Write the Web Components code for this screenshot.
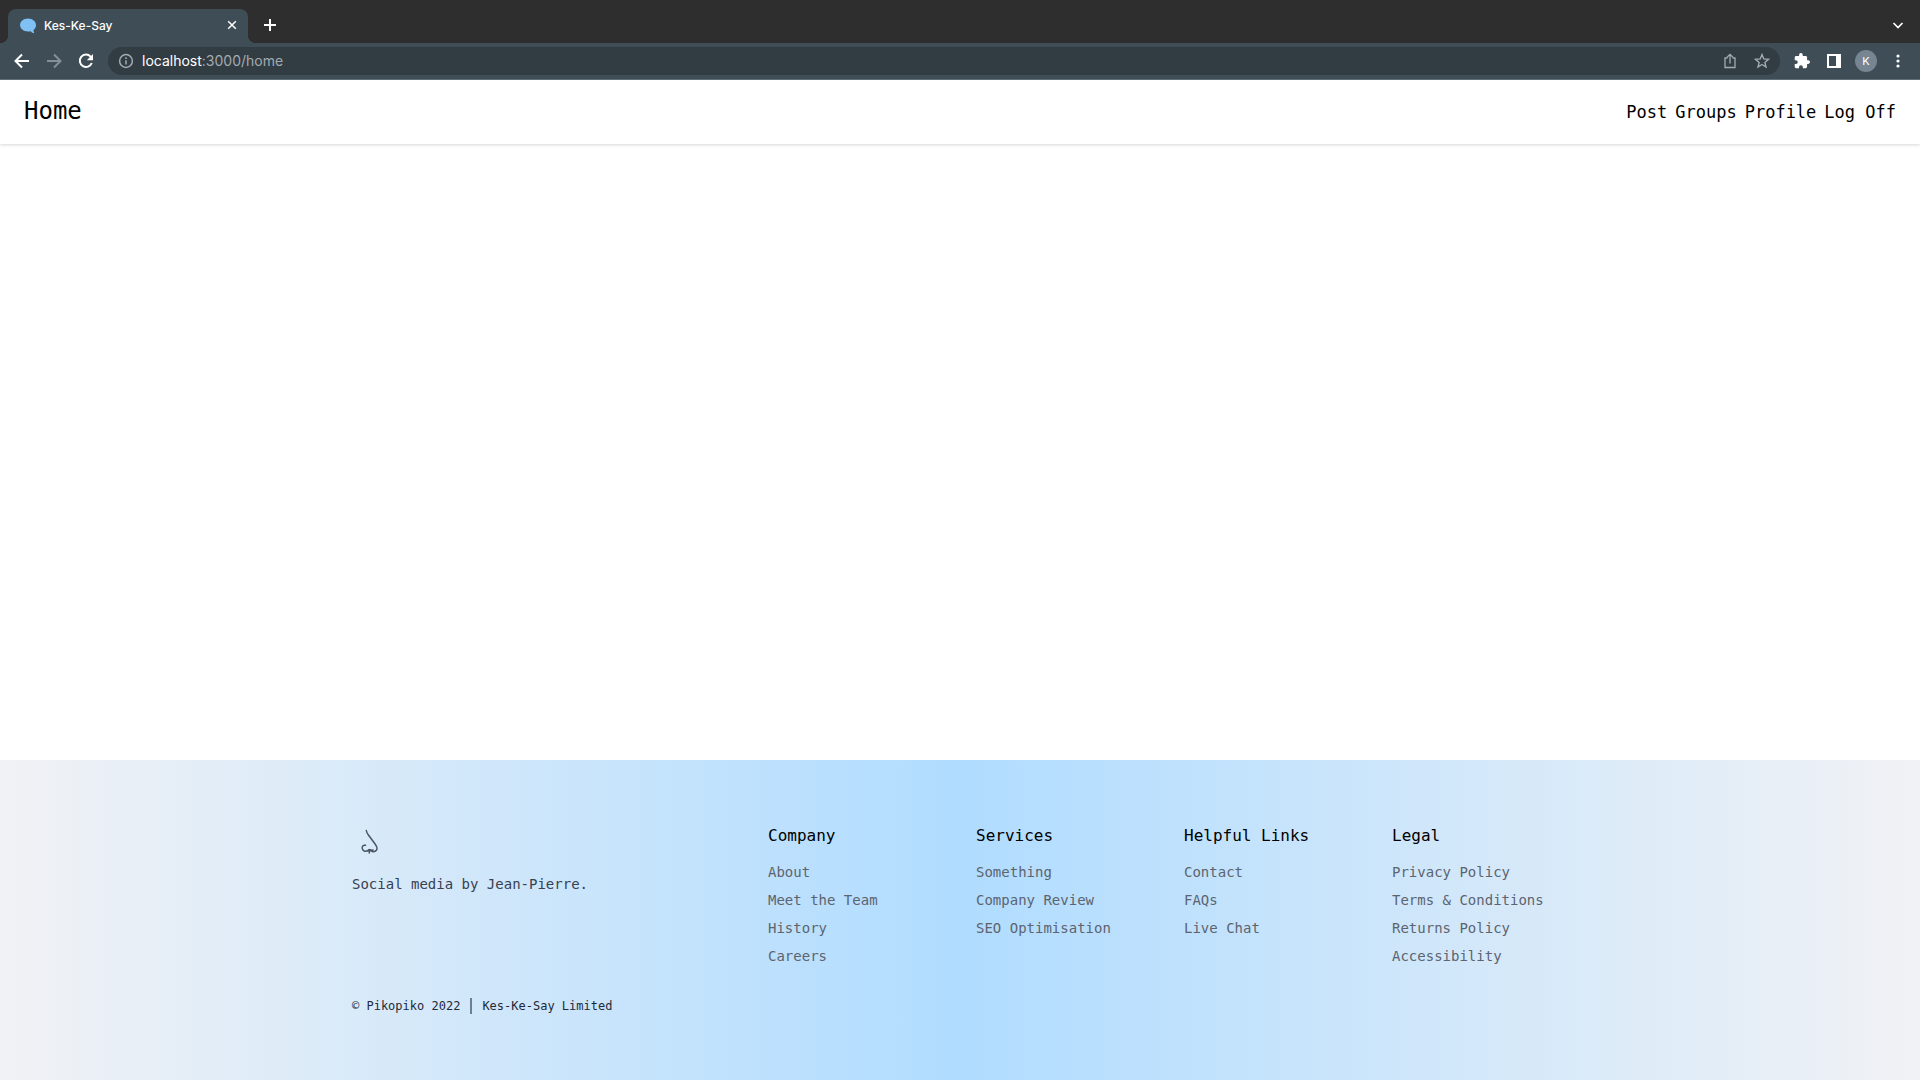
<!DOCTYPE html>
<html lang="en">
<head>
<meta charset="utf-8">
<title>Kes-Ke-Say</title>
<style>
html,body{height:100%}
body{margin:0;background:#fff;color:#000;font-family:"DejaVu Sans Mono","Liberation Mono",monospace}
</style>
</head>
<body>
<app-page>
  <browser-frame slot="frame"></browser-frame>
  <site-header slot="header"></site-header>
  <site-footer slot="footer">
    <link-column heading="Company" items="About|Meet the Team|History|Careers"></link-column>
    <link-column heading="Services" items="Something|Company Review|SEO Optimisation"></link-column>
    <link-column heading="Helpful Links" items="Contact|FAQs|Live Chat"></link-column>
    <link-column heading="Legal" items="Privacy Policy|Terms &amp; Conditions|Returns Policy|Accessibility"></link-column>
  </site-footer>
</app-page>

<template id="t-page">
<style>
:host{display:flex;flex-direction:column;min-height:100vh}
main{flex:1}
</style>
<slot name="frame"></slot>
<slot name="header"></slot>
<main></main>
<slot name="footer"></slot>
</template>

<template id="t-frame">
<style>
:host{display:block;font-family:Inter,"Liberation Sans",sans-serif;color:#fff;background:#3e4d56}
*{box-sizing:border-box}
button{display:flex;align-items:center;justify-content:center;flex:none;width:32px;height:32px;padding:0;border:0;background:none;color:inherit;font:inherit}
svg{display:block;fill:none;stroke:currentColor}
.tabs{display:flex;align-items:flex-end;height:43px;padding:0 6px 0 8px;background:#2e2e2e}
.tabs button{height:34px;padding-bottom:2px}
.tab{display:flex;align-items:center;width:240px;height:34px;padding-left:12px;border-radius:8px 8px 0 0;background:#3e4d56;font-size:12px;font-weight:500;position:relative}
.tab::before,.tab::after{content:"";position:absolute;bottom:0;width:8px;height:8px}
.tab::before{left:-8px;background:radial-gradient(circle at 0 0,transparent 8px,#3e4d56 8px)}
.tab::after{right:-8px;background:radial-gradient(circle at 100% 0,transparent 8px,#3e4d56 8px)}
.tab span{flex:1;padding:0 0 2px 8px}
.fill{flex:1}
.new{margin-left:6px}
.bar{display:flex;align-items:center;height:37px;padding:0 6px 0 6px;border-bottom:1px solid #64727b}
.dim{color:#83909a}
form{display:flex;align-items:center;flex:1;height:28px;margin:0 6px;padding:0 2px 0 10px;border-radius:14px;background:#323c43;color:#a3abb1}
.url{flex:1;padding-left:8px;font-size:14px;line-height:20px;color:#a3abb1;text-decoration:none}
.url b{font-weight:400;color:#fff}
.avatar{width:22px;height:22px;border-radius:50%;background:#778592;font-size:11px;line-height:22px;text-align:center}
</style>
<div class="tabs">
  <div class="tab">
    <svg width="16" height="16" viewBox="0 0 16 16"><path d="M8 .5C3.6.5 0 3.400 0 7s3.600 6.500 8 6.500c.9 0 1.800-.1 2.600-.3.900 1.200 2.200 2 3.900 2-.6-.8-1-2-1-3.300C15.100 10.700 16 9 16 7 16 3.400 12.400.5 8 .5z" fill="#7fc1f4" stroke="none"/></svg>
    <span>Kes-Ke-Say</span>
    <button aria-label="Close tab"><svg width="10" height="10" viewBox="0 0 10 10" stroke-width="1.500"><path d="M1.200 1.200l7.600 7.600M8.800 1.200L1.200 8.800"/></svg></button>
  </div>
  <button class="new" aria-label="New tab"><svg width="14" height="14" viewBox="0 0 14 14" stroke-width="2"><path d="M7 1v12M1 7h12"/></svg></button>
  <div class="fill"></div>
  <button aria-label="Search tabs"><svg width="12" height="12" viewBox="0 0 12 12" stroke-width="1.700"><path d="M1.500 4L6 8.500 10.500 4"/></svg></button>
</div>
<div class="bar">
  <button aria-label="Back"><svg width="16" height="16" viewBox="0 0 16 16" stroke-width="2"><path d="M15 8H2.500M8 1.500L1.500 8 8 14.500"/></svg></button>
  <button class="dim" aria-label="Forward"><svg width="16" height="16" viewBox="0 0 16 16" stroke-width="2"><path d="M1 8h12.500M8 1.500L14.500 8 8 14.500"/></svg></button>
  <button aria-label="Reload"><svg width="16" height="16" viewBox="0 0 16 16" stroke-width="2"><path d="M13.800 10A6.200 6.200 0 1 1 12.600 3.600L14 5"/><path d="M15 1v6.200H8.800z" fill="currentColor" stroke="none"/></svg></button>
  <form>
    <svg width="16" height="16" viewBox="0 0 16 16" stroke-width="1.500"><circle cx="8" cy="8" r="6.400"/><path d="M8 7.200v4.300M8 4.300v1.600"/></svg>
    <a class="url" href="#home"><b>localhost</b>:3000/home</a>
    <button type="button" aria-label="Share"><svg width="14" height="16" viewBox="0 0 14 16" stroke-width="1.300"><path d="M4.500 5H2v9.500h10V5H9.500M7 10.500V1.500M4 4.300l3-3 3 3"/></svg></button>
    <button type="button" aria-label="Bookmark"><svg width="16" height="16" viewBox="0 0 16 16" stroke-width="1.400"><path d="M8 1.600l1.800 4.300 4.700.4-3.600 3.100 1.100 4.600L8 11.500 4 14l1.100-4.600-3.600-3.100 4.700-.4z"/></svg></button>
  </form>
  <button aria-label="Extensions"><svg width="16" height="16" viewBox="1 1 22 22"><path fill="currentColor" stroke="none" d="M20.500 11H19V7c0-1.100-.9-2-2-2h-4V3.500a2.500 2.500 0 0 0-5 0V5H4c-1.100 0-2 .9-2 2v3.800h1.500a2.700 2.700 0 0 1 0 5.400H2V20c0 1.100.9 2 2 2h3.800v-1.500a2.700 2.700 0 0 1 5.400 0V22H17c1.100 0 2-.9 2-2v-4h1.500a2.500 2.500 0 0 0 0-5z"/></svg></button>
  <button aria-label="Side panel"><svg width="14" height="14" viewBox="0 0 14 14"><path fill="currentColor" stroke="none" fill-rule="evenodd" d="M0 0h14v14H0zM2 2v10h7V2z"/></svg></button>
  <button aria-label="Account"><span class="avatar">K</span></button>
  <button aria-label="Menu"><svg width="4" height="14" viewBox="0 0 4 14"><g fill="currentColor" stroke="none"><circle cx="2" cy="2" r="1.600"/><circle cx="2" cy="7" r="1.600"/><circle cx="2" cy="12" r="1.600"/></g></svg></button>
</div>
</template>

<template id="t-header">
<style>
:host{display:flex;align-items:center;justify-content:space-between;height:64px;padding:0 24px;box-shadow:0 1px 3px rgba(0,0,0,.16)}
a{color:#000;text-decoration:none}
.home{font-size:24px;line-height:32px;padding-bottom:2px}
nav{display:flex;gap:8px;font-size:17px;line-height:28px}
</style>
<a class="home" href="#home">Home</a>
<nav><a href="#post">Post</a><a href="#groups">Groups</a><a href="#profile">Profile</a><a href="#logoff">Log Off</a></nav>
</template>

<template id="t-footer">
<style>
:host{display:block;background:linear-gradient(90deg,#f1f2f5,#b0dcff 50%,#f1f2f5)}
.wrap{max-width:1216px;margin:0 auto;padding:64px 32px 66px}
.grid{display:grid;grid-template-columns:repeat(6,minmax(0,1fr));gap:32px}
.brand{grid-column:span 2}
svg{display:block}
p{margin:0}
.brand p{margin-top:14px;font-size:14px;line-height:24px;color:#374151}
.copy{display:flex;align-items:center;gap:10px;margin-top:32px;font-size:12px;line-height:16px;color:#1f2937}
.copy i{width:2px;height:16px;background:#6f7f8e}
</style>
<footer class="wrap">
  <div class="grid">
    <div class="brand">
      <svg width="34" height="34" viewBox="0 0 34 34" fill="none" stroke="#4b5563" stroke-width="1.500" stroke-linecap="round"><path d="M14.300 6.500c.3 2 1 3 2.300 4.800l6.500 8.700c2.400 3.300 2.600 5.600.4 7-1.500.9-3.200.7-4.400-.1M13.500 21.300c-2.500-.5-3.700 1.200-3.200 3.300.5 2.300 2.800 3.200 5.100 2.200 1-.5 1.200-1.500 2.200-1.400 1.500.1 1.700 1.500 3.500.6M17.300 26v3M15.800 27c.8-.8 2-.8 3.600-.2"/></svg>
      <p>Social media by Jean-Pierre.</p>
    </div>
    <slot></slot>
  </div>
  <div class="copy"><span>© Pikopiko 2022</span><i></i><span>Kes-Ke-Say Limited</span></div>
</footer>
</template>

<template id="t-column">
<style>
:host{display:block;white-space:nowrap}
h2{margin:0;font-size:16px;line-height:24px;font-weight:400;color:#000}
ul{display:flex;flex-direction:column;gap:8px;margin:14px 0 0;padding:0;list-style:none;font-size:14px;line-height:20px}
a{display:block;color:#5c6470;text-decoration:none}
</style>
<h2></h2><ul></ul>
</template>

<script>
class TemplateElement extends HTMLElement {
  connectedCallback() {
    if (this.shadowRoot) return;
    const root = this.attachShadow({ mode: "open" });
    root.append(document.getElementById(this.constructor.template).content.cloneNode(true));
    this.render(root);
  }
  render() {}
}
customElements.define("app-page", class extends TemplateElement { static template = "t-page"; });
customElements.define("browser-frame", class extends TemplateElement { static template = "t-frame"; });
customElements.define("site-header", class extends TemplateElement { static template = "t-header"; });
customElements.define("site-footer", class extends TemplateElement { static template = "t-footer"; });
customElements.define("link-column", class extends TemplateElement {
  static template = "t-column";
  render(root) {
    root.querySelector("h2").textContent = this.getAttribute("heading");
    for (const label of this.getAttribute("items").split("|")) {
      const item = document.createElement("li");
      const link = document.createElement("a");
      link.href = "#" + label.toLowerCase().replace(/[^a-z]+/g, "-");
      link.textContent = label;
      item.append(link);
      root.querySelector("ul").append(item);
    }
  }
});
</script>
</body>
</html>
